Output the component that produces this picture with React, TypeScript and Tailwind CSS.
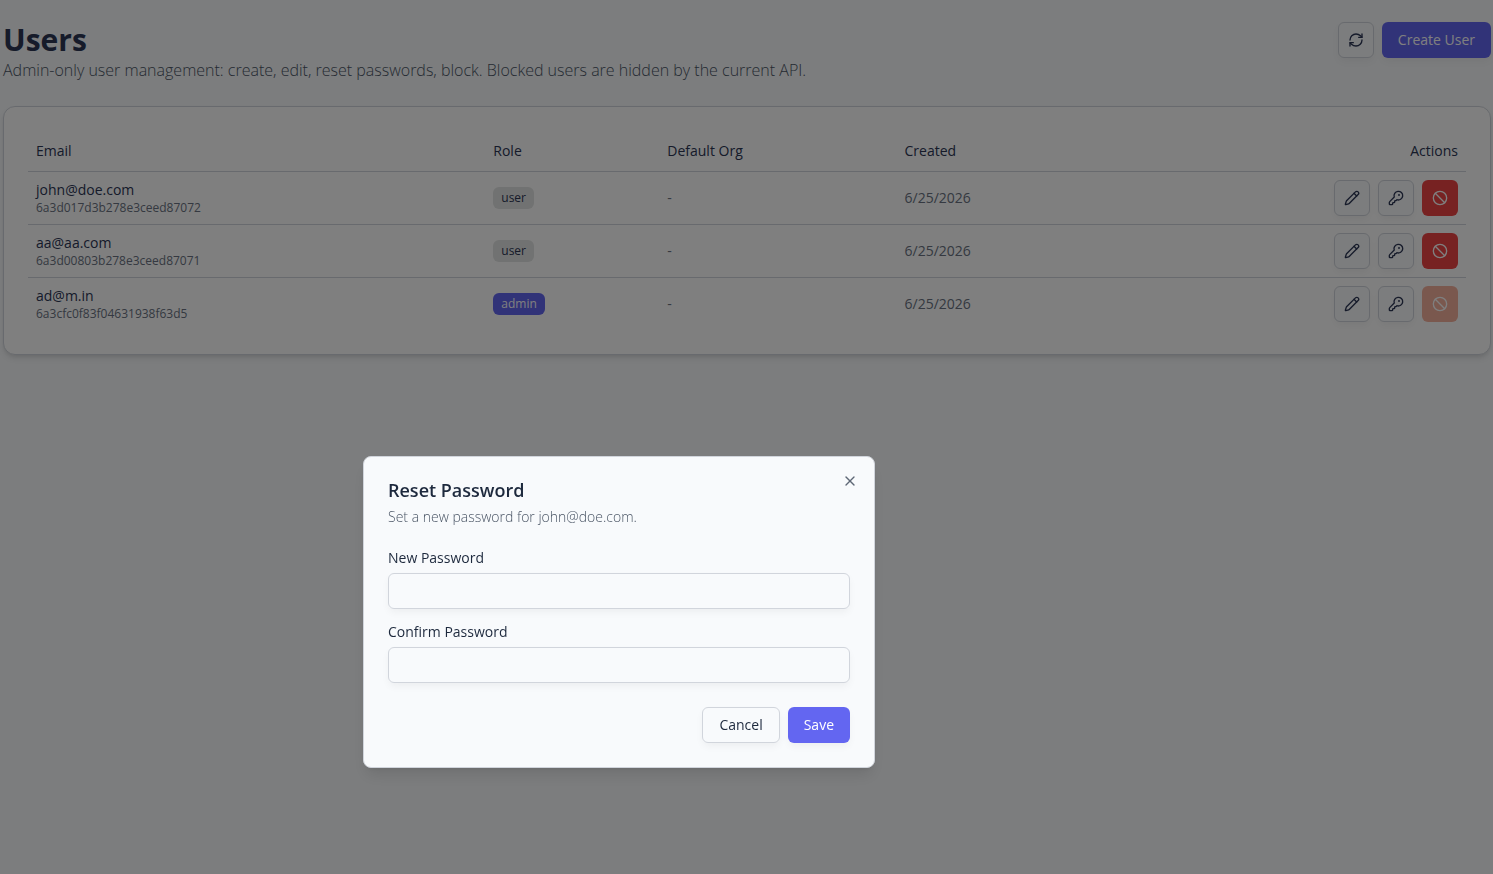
import { Ban, KeyRound, Pencil, RefreshCw, X } from "lucide-react";

type User = {
  id: string;
  email: string;
  role: "user" | "admin";
  defaultOrg?: string;
  created: string;
};

const users: User[] = [
  { id: "6a3d017d3b278e3ceed87072", email: "john@doe.com", role: "user", created: "6/25/2026" },
  { id: "6a3d00803b278e3ceed87071", email: "aa@aa.com", role: "user", created: "6/25/2026" },
  { id: "6a3cfc0f83f04631938f63d5", email: "ad@m.in", role: "admin", created: "6/25/2026" },
];

const softShadow = "shadow-[0_4px_8px_-1px_rgba(0,0,0,0.05)]";
const iconButton = `flex size-9 items-center justify-center rounded-md border border-gray-300 bg-slate-50 ${softShadow}`;
const primaryButton = `h-9 rounded-md bg-[#6366f1] px-4 text-sm font-medium text-white ${softShadow}`;

function RoleBadge({ role }: { role: User["role"] }) {
  return (
    <span
      className={`flex w-fit rounded-md px-2 py-[3px] text-xs font-medium ${
        role === "admin" ? "bg-[#6366f1] text-white" : "bg-[#e3e5e4]"
      }`}
    >
      {role}
    </span>
  );
}

function UserRow({ user }: { user: User }) {
  const isAdmin = user.role === "admin";
  return (
    <tr className="border-b border-gray-300 last:border-0">
      <td className="px-2">
        <div className="text-sm font-medium">{user.email}</div>
        <div className="text-xs text-gray-500">{user.id}</div>
      </td>
      <td className="px-2">
        <RoleBadge role={user.role} />
      </td>
      <td className="px-2 text-sm text-gray-500">{user.defaultOrg ?? "-"}</td>
      <td className="px-2 text-sm text-gray-500">{user.created}</td>
      <td className="p-2">
        <div className="flex justify-end gap-2">
          <button aria-label={`Edit ${user.email}`} className={iconButton}>
            <Pencil className="size-4" />
          </button>
          <button aria-label={`Reset password for ${user.email}`} className={iconButton}>
            <KeyRound className="size-4" />
          </button>
          <button
            aria-label={`Block ${user.email}`}
            disabled={isAdmin}
            className={`flex size-9 items-center justify-center rounded-md text-white ${
              isAdmin ? "bg-[#f5b09c]" : "bg-[#ef4444]"
            }`}
          >
            <Ban className="size-4" />
          </button>
        </div>
      </td>
    </tr>
  );
}

function PasswordField({ id, label }: { id: string; label: string }) {
  return (
    <div className="flex flex-col gap-2">
      <label htmlFor={id} className="text-sm leading-none font-medium">
        {label}
      </label>
      <input
        id={id}
        type="password"
        className={`h-9 w-full rounded-md border border-gray-300 bg-transparent px-3 text-sm outline-none ${softShadow}`}
      />
    </div>
  );
}

function ResetPasswordDialog({ email }: { email: string }) {
  return (
    <div className="fixed inset-0 bg-black/50">
      <div
        role="dialog"
        aria-modal="true"
        aria-labelledby="reset-title"
        className="absolute top-[456px] left-[363px] w-full max-w-lg rounded-lg border border-gray-300 bg-slate-50 p-6 text-slate-800 shadow-lg"
      >
        <div className="flex flex-col gap-2">
          <h2 id="reset-title" className="text-lg leading-none font-semibold">
            Reset Password
          </h2>
          <p className="text-sm font-light text-gray-600">Set a new password for {email}.</p>
        </div>
        <form className="mt-6 flex flex-col gap-4">
          <PasswordField id="new-password" label="New Password" />
          <PasswordField id="confirm-password" label="Confirm Password" />
          <div className="mt-2 flex justify-end gap-2">
            <button type="button" className={`h-9 rounded-md border border-gray-300 px-4 text-sm font-medium ${softShadow}`}>
              Cancel
            </button>
            <button type="submit" className={primaryButton}>
              Save
            </button>
          </div>
        </form>
        <button aria-label="Close" className="absolute top-4 right-4 opacity-70">
          <X className="size-4" />
        </button>
      </div>
    </div>
  );
}

export default function App() {
  return (
    <div className="min-h-screen bg-slate-50 pt-[22px] pr-0.5 pl-[3px] font-['Open_Sans',sans-serif] text-[#2c3655]">
      <header className="flex items-start justify-between">
        <div>
          <h1 className="text-3xl font-bold">Users</h1>
          <p className="text-base font-light text-gray-600">
            Admin-only user management: create, edit, reset passwords, block. Blocked users are hidden by the current API.
          </p>
        </div>
        <div className="flex gap-2">
          <button aria-label="Refresh" className={iconButton}>
            <RefreshCw className="size-4" />
          </button>
          <button className={primaryButton}>Create User</button>
        </div>
      </header>

      <main className="mt-6 rounded-xl border border-gray-300 bg-white p-6 shadow-md">
        <table className="w-full table-fixed text-left">
          <thead>
            <tr className="h-10 border-b border-gray-300 text-sm">
              <th className="w-[31.8%] px-2 font-medium">Email</th>
              <th className="w-[12.1%] px-2 font-medium">Role</th>
              <th className="w-[16.5%] px-2 font-medium">Default Org</th>
              <th className="w-[18%] px-2 font-medium">Created</th>
              <th className="px-2 text-right font-medium">Actions</th>
            </tr>
          </thead>
          <tbody>
            {users.map((user) => (
              <UserRow key={user.id} user={user} />
            ))}
          </tbody>
        </table>
      </main>

      <ResetPasswordDialog email="john@doe.com" />
    </div>
  );
}
